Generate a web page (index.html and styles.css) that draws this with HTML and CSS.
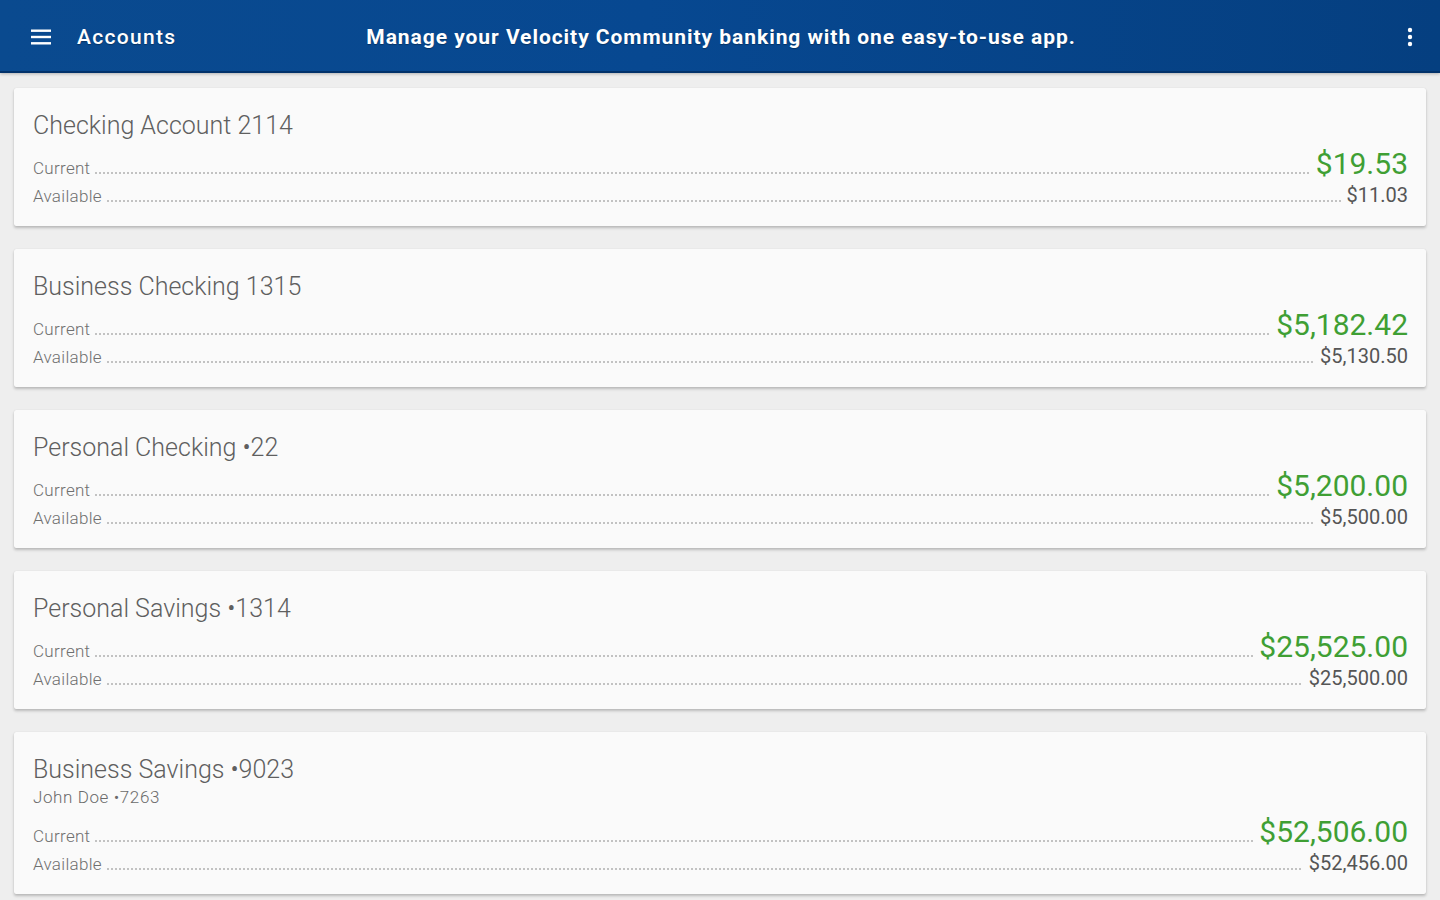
FILE: index.html
```html
<!DOCTYPE html>
<html lang="en">
<head>
<meta charset="utf-8">
<title>Accounts</title>
<link rel="stylesheet" href="styles.css">
</head>
<body>
<header class="appbar">
  <button class="icon-btn menu" aria-label="Menu">
    <svg width="20" height="16" viewBox="0 0 20 16"><rect x="0" y="0.5" width="20" height="2.4" fill="#fff"/><rect x="0" y="6.8" width="20" height="2.4" fill="#fff"/><rect x="0" y="13.1" width="20" height="2.4" fill="#fff"/></svg>
  </button>
  <h1 class="appbar-title">Accounts</h1>
  <p class="appbar-tagline">Manage your Velocity Community banking with one easy-to-use app.</p>
  <button class="icon-btn more" aria-label="More options">
    <svg width="6" height="20" viewBox="0 0 6 20"><circle cx="3" cy="3" r="2.2" fill="#fff"/><circle cx="3" cy="10" r="2.2" fill="#fff"/><circle cx="3" cy="17" r="2.2" fill="#fff"/></svg>
  </button>
</header>

<main class="accounts">
  <section class="card">
    <h2 class="card-title">Checking Account 2114</h2>
    <div class="row row-current"><span class="label">Current</span><span class="leader"></span><span class="amount-current">$19.53</span></div>
    <div class="row row-available"><span class="label">Available</span><span class="leader"></span><span class="amount-available">$11.03</span></div>
  </section>
  <section class="card">
    <h2 class="card-title">Business Checking 1315</h2>
    <div class="row row-current"><span class="label">Current</span><span class="leader"></span><span class="amount-current">$5,182.42</span></div>
    <div class="row row-available"><span class="label">Available</span><span class="leader"></span><span class="amount-available">$5,130.50</span></div>
  </section>
  <section class="card">
    <h2 class="card-title">Personal Checking •22</h2>
    <div class="row row-current"><span class="label">Current</span><span class="leader"></span><span class="amount-current">$5,200.00</span></div>
    <div class="row row-available"><span class="label">Available</span><span class="leader"></span><span class="amount-available">$5,500.00</span></div>
  </section>
  <section class="card">
    <h2 class="card-title">Personal Savings •1314</h2>
    <div class="row row-current"><span class="label">Current</span><span class="leader"></span><span class="amount-current">$25,525.00</span></div>
    <div class="row row-available"><span class="label">Available</span><span class="leader"></span><span class="amount-available">$25,500.00</span></div>
  </section>
  <section class="card">
    <h2 class="card-title">Business Savings •9023</h2>
    <p class="card-sub">John Doe •7263</p>
    <div class="row row-current"><span class="label">Current</span><span class="leader"></span><span class="amount-current">$52,506.00</span></div>
    <div class="row row-available"><span class="label">Available</span><span class="leader"></span><span class="amount-available">$52,456.00</span></div>
  </section>
</main>
</body>
</html>
```

FILE: styles.css
```css
* { box-sizing: border-box; }

html, body {
  margin: 0;
  padding: 0;
  height: 100%;
}

body {
  background: #eeeeee;
  font-family: Roboto, "Noto Sans", "Liberation Sans", sans-serif;
  overflow: hidden;
}

.appbar {
  height: 73px;
  display: flex;
  align-items: center;
  padding: 2px 24px 0 29px;
  background: linear-gradient(to right, #0a4a8f 0%, #074891 45%, #053f80 100%);
  border-bottom: 2px solid #02326a;
  box-shadow: 0 1px 3px rgba(0, 0, 0, 0.25);
  color: #fff;
}

.icon-btn {
  background: none;
  border: 0;
  padding: 0;
  display: flex;
  align-items: center;
  justify-content: center;
  cursor: pointer;
}

.menu { width: 24px; height: 24px; }

.appbar-title {
  margin: 0 0 0 24px;
  font-size: 21px;
  font-weight: 500;
  letter-spacing: 1.3px;
  text-shadow: 0 1px 1px rgba(0, 0, 0, 0.3);
}

.appbar-tagline {
  margin: 0 0 0 190px;
  font-size: 21px;
  font-weight: 700;
  letter-spacing: 0.95px;
  flex: 1;
  text-shadow: 0 1px 1px rgba(0, 0, 0, 0.3);
}

.more { width: 12px; height: 24px; }

.accounts {
  display: flex;
  flex-direction: column;
  gap: 23px;
  padding: 15px 14px 0 14px;
}

.card {
  background: #fafafa;
  border-radius: 2px;
  box-shadow: 0 2px 3px rgba(0, 0, 0, 0.22), 0 0 1px rgba(0, 0, 0, 0.12);
  padding: 23px 18px 17px 19px;
}

.card-title {
  margin: 0;
  font-size: 25px;
  font-weight: 300;
  line-height: 30px;
  color: #5f5f5f;
}

.card-sub {
  margin: 0 0 3px;
  font-size: 17px;
  font-weight: 300;
  letter-spacing: 0.6px;
  line-height: 24px;
  color: #6a6a6a;
}

.row {
  display: flex;
  align-items: baseline;
}

.row-current { margin-top: 7px; line-height: 32px; }
.row-available { margin-top: -2px; line-height: 26px; }

.label {
  font-size: 17px;
  font-weight: 300;
  letter-spacing: 0.3px;
  color: #6f6f6f;
}

.leader {
  flex: 1;
  height: 2px;
  margin: 0 6px 0 5px;
  background-image: linear-gradient(to right, #c2c2c2 0, #c2c2c2 2px, transparent 2px);
  background-size: 4px 2px;
  background-repeat: repeat-x;
  background-position: left bottom;
}

.amount-current {
  font-size: 30px;
  font-weight: 400;
  color: #3f9f34;
}

.amount-available {
  font-size: 20px;
  font-weight: 400;
  color: #555;
}
```
